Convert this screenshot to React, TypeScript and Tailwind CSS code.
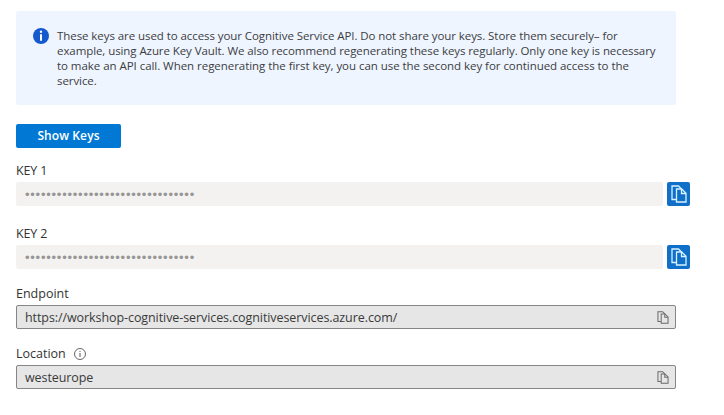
function CopyIcon({ className, weight = 1 }: { className: string; weight?: number }) {
  return (
    <svg className={className} viewBox="0 0 16 18" fill="none" stroke="currentColor" strokeWidth={weight} aria-hidden="true">
      <path d="M5 14.5H1V1h6.5l3 3" />
      <path d="M5.5 4h5.2L15 8.2V17H5.5z" />
      <path d="M10.5 4v4.5H15" />
    </svg>
  );
}

function SecretField({ label }: { label: string }) {
  return (
    <div className="h-[63px]">
      <div className="h-[22px] pt-px text-[12.5px] leading-5 tracking-[-0.15px]">{label}</div>
      <div className="flex h-6 gap-1">
        <div className="flex w-[647px] items-center rounded-xs bg-[#f3f2f1] pl-[9px] text-[#989694]">
          <span className="pt-0.5 font-['Liberation_Sans',sans-serif] text-[13px] leading-6 tracking-[0.76px]">{"•".repeat(32)}</span>
        </div>
        <button aria-label={`Copy ${label}`} className="flex w-[23px] items-center justify-center rounded-xs bg-[#0f6fc9] text-[#d9f3ff]">
          <CopyIcon className="h-[18px] w-4" weight={1.3} />
        </button>
      </div>
    </div>
  );
}

function ReadOnlyField({ children }: { children: string }) {
  return (
    <div className="flex h-6 w-[660px] items-center justify-between rounded-xs border border-[#858585] bg-[#e6e6e6] pr-1.5 pl-2 text-[12.5px] text-[#3a3a3a]">
      <span className="pt-0.5 tracking-[-0.08px]">{children}</span>
      <CopyIcon className="h-[13px] w-3 text-[#6a6a6a]" weight={1.4} />
    </div>
  );
}

export default function App() {
  return (
    <main className="h-[415px] w-[724px] overflow-hidden bg-white pt-[11px] pl-4 font-['Open_Sans','Noto_Sans',sans-serif] text-[#333]">
      <section className="flex h-[94px] w-[660px] gap-2 rounded-xs bg-[#eff5ff] pt-[17px] pl-[17px]">
        <svg className="size-4 shrink-0" viewBox="0 0 16 16" aria-hidden="true">
          <circle cx="8" cy="8" r="8" fill="#1559cf" />
          <circle cx="8" cy="3.8" r="1.2" fill="#fff" />
          <path d="M7 6.3h2v6.4H7z" fill="#fff" />
        </svg>
        <p className="text-[11.5px] leading-[15px] whitespace-nowrap text-[#3b3d42]">
          <span className="block tracking-[-0.07px]">These keys are used to access your Cognitive Service API. Do not share your keys. Store them securely– for</span>
          <span className="block tracking-[-0.08px]">example, using Azure Key Vault. We also recommend regenerating these keys regularly. Only one key is necessary</span>
          <span className="block tracking-[-0.045px]">to make an API call. When regenerating the first key, you can use the second key for continued access to the</span>
          <span className="block tracking-[-0.07px]">service.</span>
        </p>
      </section>
      <button className="mt-[19px] mb-3 block h-6 w-[105px] rounded-xs bg-[#0078d4] text-[12px] leading-6 font-semibold tracking-[0.1px] text-white">Show Keys</button>
      <SecretField label="KEY 1" />
      <SecretField label="KEY 2" />
      <div className="h-[60px] pt-px">
        <div className="h-[18px] text-[12.5px] leading-[14px]">Endpoint</div>
        <ReadOnlyField>https://workshop-cognitive-services.cognitiveservices.azure.com/</ReadOnlyField>
      </div>
      <div className="pt-px">
        <div className="flex h-[18px] gap-2 text-[12.5px] leading-[14px]">
          Location
          <svg className="mt-px size-3 text-[#555]" viewBox="0 0 12 12" fill="none" stroke="currentColor" aria-hidden="true">
            <circle cx="6" cy="6" r="5.5" strokeWidth=".9" />
            <path d="M6 5v4M6 3v1" />
          </svg>
        </div>
        <ReadOnlyField>westeurope</ReadOnlyField>
      </div>
    </main>
  );
}
